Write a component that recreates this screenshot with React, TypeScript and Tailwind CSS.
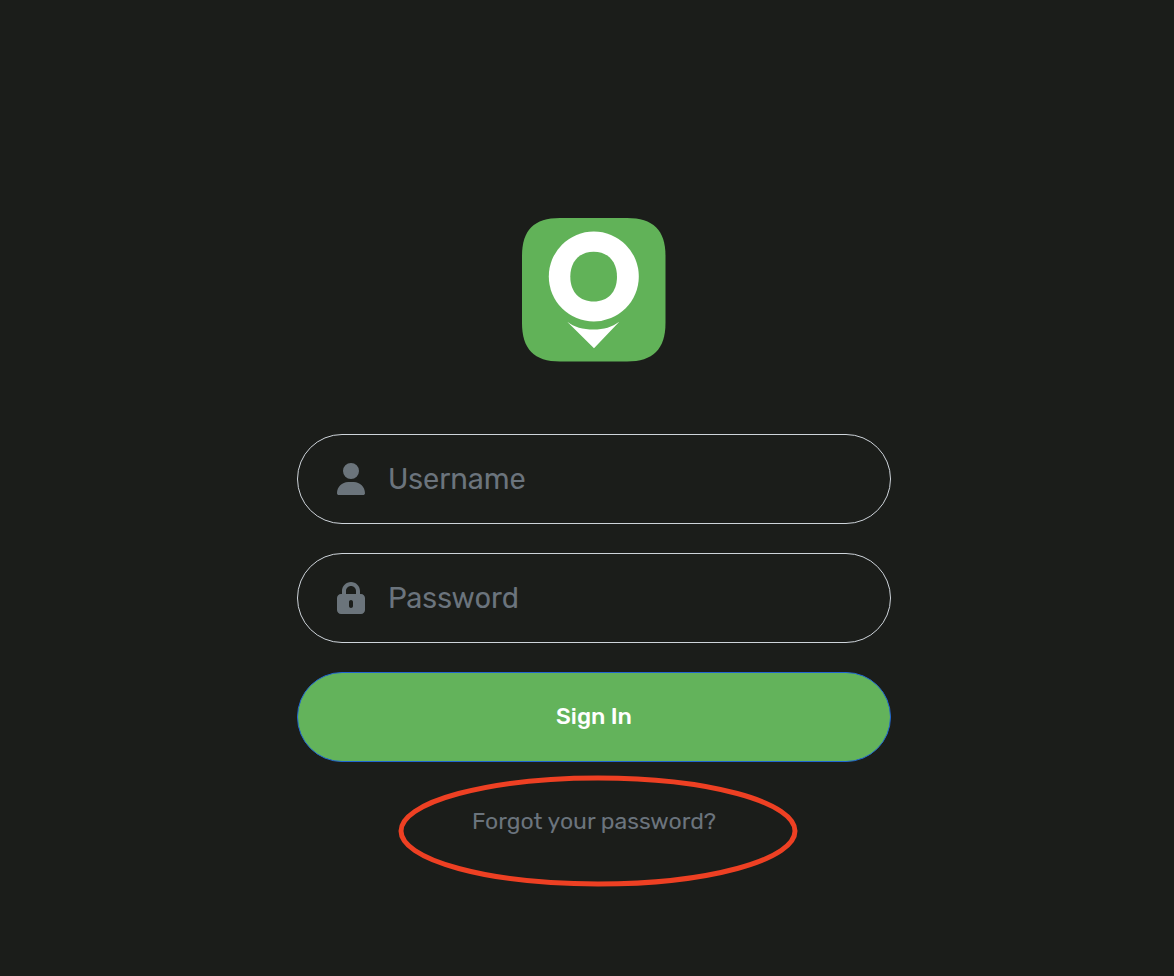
import type { ReactNode } from "react";

function Logo() {
  return (
    <svg viewBox="0 0 144 144" className="size-36" role="img" aria-label="Logo">
      <path
        fill="#61b258"
        d="M0 38C0 12 12 0 38 0H105C131 0 143.5 12 143.5 38V105C143.5 131 131 143.5 105 143.5H38C12 143.5 0 131 0 105Z"
      />
      <circle cx="71.8" cy="58.5" r="45" fill="#fff" />
      <path
        fill="#61b258"
        d="M48.3 58.7C48.3 43.2 57.8 33.7 71.7 33.7S95 43.2 95 58.7 85.6 83.5 71.7 83.5 48.3 74.2 48.3 58.7Z"
      />
      <path fill="#fff" d="M45.2 103.7C52 109 61 111.5 71.5 111.5S90 109 97.3 103.7L72 130.3Z" />
    </svg>
  );
}

function UserIcon() {
  return (
    <svg viewBox="0 0 448 512" className="h-8 w-7 shrink-0 fill-[#6b747b]" aria-hidden="true">
      <path d="M224 256A128 128 0 1 0 224 0a128 128 0 1 0 0 256zm-45.7 48C79.8 304 0 383.8 0 482.3C0 498.7 13.3 512 29.7 512H418.3c16.4 0 29.7-13.3 29.7-29.7C448 383.8 368.2 304 269.7 304H178.3z" />
    </svg>
  );
}

function LockIcon() {
  return (
    <svg viewBox="0 0 448 512" className="h-8 w-7 shrink-0 fill-[#6b747b]" aria-hidden="true">
      <path
        fillRule="evenodd"
        d="M144 144v48H304V144c0-44.2-35.8-80-80-80s-80 35.8-80 80zM80 192V144C80 64.5 144.5 0 224 0s144 64.5 144 144v48h16c35.3 0 64 28.7 64 64V448c0 35.3-28.7 64-64 64H64c-35.3 0-64-28.7-64-64V256c0-35.3 28.7-64 64-64H80zM256 320c0-17.7-14.3-32-32-32s-32 14.3-32 32v64c0 17.7 14.3 32 32 32s32-14.3 32-32V320z"
      />
    </svg>
  );
}

type FieldProps = { id: string; label: string; type: string; icon: ReactNode };

function Field({ id, label, type, icon }: FieldProps) {
  return (
    <label
      htmlFor={id}
      className="flex h-[90px] items-center gap-[23px] rounded-full border border-[#ced4da] px-[39px]"
    >
      {icon}
      <input
        id={id}
        type={type}
        aria-label={label}
        placeholder={label}
        className="min-w-0 flex-1 bg-transparent text-[29px] leading-10 text-white outline-none placeholder:text-[#6b747d]"
      />
    </label>
  );
}

export default function App() {
  return (
    <main className="flex min-h-screen flex-col items-center bg-[#1b1d1a] pt-[218px] pb-20 pl-[14px] font-[Rubik,Roboto,sans-serif]">
      <Logo />
      <form
        className="mt-[72px] flex w-full max-w-[594px] flex-col gap-[29px]"
        onSubmit={(event) => event.preventDefault()}
      >
        <Field id="username" label="Username" type="text" icon={<UserIcon />} />
        <Field id="password" label="Password" type="password" icon={<LockIcon />} />
        <button
          type="submit"
          className="h-[90px] rounded-full border border-[#2166d1] bg-[#63b35b] pb-0.5 text-[23px] leading-8 font-medium text-white"
        >
          Sign In
        </button>
      </form>
      <div className="relative mt-[43px] flex justify-center">
        <a href="#forgot" className="text-[23px] leading-8 text-[#6b747d]">
          Forgot your password?
        </a>
        <svg
          viewBox="0 0 400 112"
          className="pointer-events-none absolute -top-[30px] left-1/2 ml-1 w-[400px] max-w-none -translate-x-1/2"
          aria-hidden="true"
        >
          <ellipse cx="200" cy="56" rx="197" ry="53" fill="none" stroke="#ee4023" strokeWidth="5" />
        </svg>
      </div>
    </main>
  );
}
